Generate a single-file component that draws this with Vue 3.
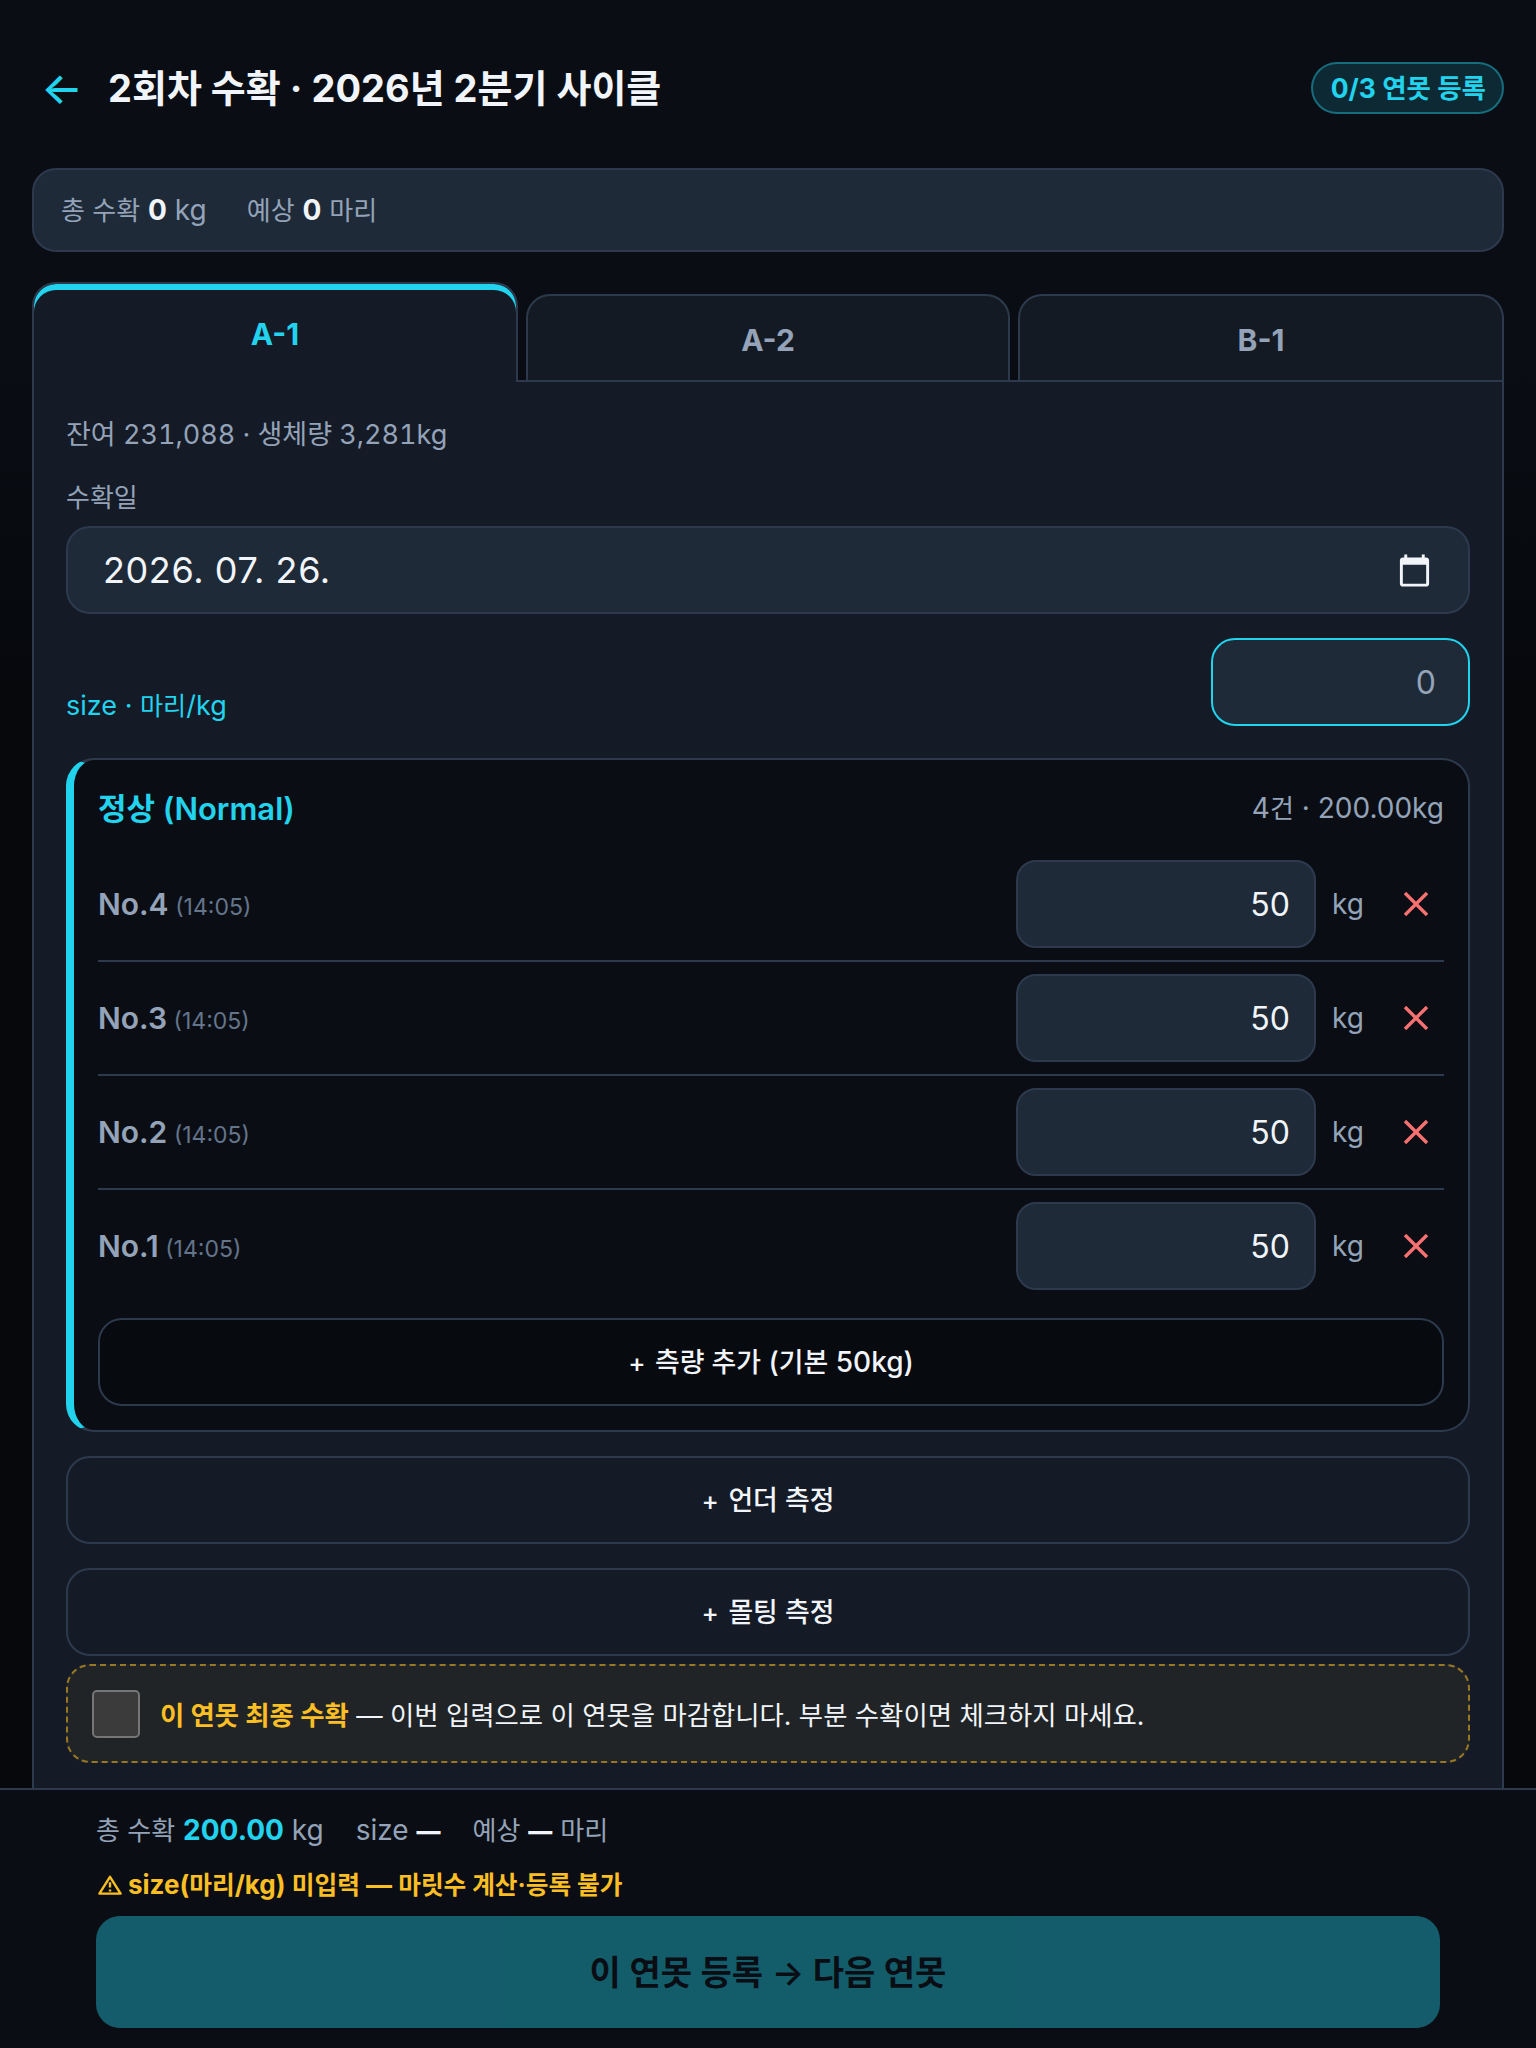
<script setup>
const rows = [
  { no: 'No.4', time: '(14:05)', kg: 50 },
  { no: 'No.3', time: '(14:05)', kg: 50 },
  { no: 'No.2', time: '(14:05)', kg: 50 },
  { no: 'No.1', time: '(14:05)', kg: 50 },
]
const tabs = [
  { name: 'A-1', active: true },
  { name: 'A-2', active: false },
  { name: 'B-1', active: false },
]
</script>

<template>
  <div class="page">
    <main class="main">
      <header class="head">
        <span class="back">←</span>
        <h1 class="title">2회차 수확 · 2026년 2분기 사이클</h1>
        <span class="badge">0/3 연못 등록</span>
      </header>

      <section class="summary">
        <span><i>총 수확</i> <b>0</b> kg</span>
        <span><i>예상</i> <b>0</b> <i>마리</i></span>
      </section>

      <nav class="tabs">
        <div v-for="t in tabs" :key="t.name" class="tab" :class="{ active: t.active }">{{ t.name }}</div>
      </nav>

      <section class="panel">
        <div class="info">잔여 231,088 · 생체량 3,281kg</div>
        <div class="label">수확일</div>
        <div class="field date">
          <span>2026. 07. 26.</span>
          <svg class="cal" viewBox="0 0 24 24" width="35" height="35">
            <path fill="#f1f5f9" d="M20 3h-1V1h-2v2H7V1H5v2H4c-1.1 0-2 .9-2 2v16c0 1.1.9 2 2 2h16c1.1 0 2-.9 2-2V5c0-1.1-.9-2-2-2zm0 18H4V8h16v13z" />
          </svg>
        </div>

        <div class="size-row">
          <span class="size-label">size · <i>마리</i>/kg</span>
          <div class="field size-input">0</div>
        </div>

        <div class="group">
          <div class="group-head">
            <span class="group-title">정상 (Normal)</span>
            <span class="group-meta">4<i>건</i> · 200.00kg</span>
          </div>
          <div v-for="r in rows" :key="r.no" class="row">
            <span class="row-name">{{ r.no }} <small>{{ r.time }}</small></span>
            <div class="field kg-input">{{ r.kg }}</div>
            <span class="unit">kg</span>
            <span class="del">
              <svg viewBox="0 0 24 24" width="24" height="24">
                <path d="M1 1 L23 23 M23 1 L1 23" stroke="#f87171" stroke-width="3.4" fill="none" />
              </svg>
            </span>
          </div>
          <div class="add add-inner"><span><span class="plus">+</span> <i>측량 추가</i> (<i>기본</i> 50kg)</span></div>
        </div>

        <div class="add"><span><span class="plus">+</span> <i>언더 측정</i></span></div>
        <div class="add"><span><span class="plus">+</span> <i>몰팅 측정</i></span></div>

        <div class="final">
          <span class="check"></span>
          <span class="final-text"><b>이 연못 최종 수확</b> — 이번 입력으로 이 연못을 마감합니다. 부분 수확이면 체크하지 마세요.</span>
        </div>
      </section>
    </main>

    <footer class="foot">
      <div class="foot-sum">
        <span><i>총 수확</i> <b class="hl">200.00</b> kg</span>
        <span>size <b class="dash">—</b></span>
        <span><i>예상</i> <b class="dash">—</b> <i>마리</i></span>
      </div>
      <div class="warn">
        <svg class="warn-icon" viewBox="0 0 24 20" width="24" height="20">
          <path d="M12 1.8 L22.6 18.6 H1.4 Z" fill="none" stroke="#fbbf24" stroke-width="2.4" stroke-linejoin="round" />
          <path d="M12 7.2 V12.6 M12 14.4 V16.4" fill="none" stroke="#fbbf24" stroke-width="2.4" />
        </svg>
        <span>size(<i>마리</i>/kg) <i>미입력</i> — <i>마릿수 계산·등록 불가</i></span>
      </div>
      <button class="submit" type="button">이 연못 등록 → 다음 연못</button>
    </footer>
  </div>
</template>

<style>
html, body { margin: 0; background: #0a0e14; }
</style>

<style scoped>
.page {
  height: 2048px;
  display: flex;
  flex-direction: column;
  background: #0a0e14;
  color: #f1f5f9;
  font-family: Inter, "Noto Sans CJK KR", sans-serif;
  overflow: hidden;
}
i {
  font-style: normal;
  font-size: 0.93em;
}
.main {
  flex: 1;
  min-height: 0;
  overflow: hidden;
  padding: 62px 32px 0;
  background: linear-gradient(180deg, #0a0e14 0, #0a0e14 280px, #06080c 700px, #06080c 100%);
}
.head {
  display: flex;
  align-items: center;
  height: 52px;
  margin-bottom: 54px;
}
.back {
  width: 76px;
  padding-left: 9px;
  box-sizing: border-box;
  font-size: 44px;
  font-weight: 500;
  line-height: 50px;
  color: #22d3ee;
}
.title {
  margin: 0;
  flex: 1;
  font-size: 38px;
  font-weight: 700;
  line-height: 52px;
}
.badge {
  box-sizing: border-box;
  height: 52px;
  padding: 0 16px 0 18px;
  border: 2px solid rgba(34, 211, 238, 0.4);
  border-radius: 26px;
  background: rgba(34, 211, 238, 0.15);
  color: #22d3ee;
  font-size: 26.5px;
  font-weight: 700;
  line-height: 48px;
}
.summary {
  box-sizing: border-box;
  height: 84px;
  display: flex;
  align-items: center;
  gap: 40px;
  padding: 0 27px 3px;
  margin-bottom: 30px;
  background: #1e2a38;
  border: 2px solid #2d3a4d;
  border-radius: 24px;
  color: #94a3b8;
  font-size: 28px;
}
.summary b { color: #f1f5f9; font-weight: 700; }
.tabs {
  box-sizing: border-box;
  display: flex;
  align-items: flex-end;
  gap: 8px;
  height: 100px;
  border-bottom: 2px solid #2d3a4d;
}
.tab {
  flex: 1 1 0;
  box-sizing: border-box;
  height: 86px;
  padding-top: 4px;
  display: flex;
  align-items: center;
  justify-content: center;
  background: #141a24;
  border: 2px solid #2d3a4d;
  border-bottom: 0;
  border-radius: 24px 24px 0 0;
  color: #94a3b8;
  font-size: 30px;
  font-weight: 700;
}
.tab:nth-child(2) { flex: 0 0 484px; }
.tab.active {
  height: 100px;
  margin-bottom: -2px;
  padding-top: 2px;
  position: relative;
  background: #141b27;
  box-shadow: inset 0 6px 0 #22d3ee;
  color: #22d3ee;
}
.panel {
  box-sizing: border-box;
  height: 1500px;
  padding: 33px 32px 0;
  background: #141b27;
  border: 2px solid #2d3a4d;
  border-top: 0;
}
.info {
  font-size: 27px;
  line-height: 40px;
  color: #94a3b8;
  font-variant-numeric: tabular-nums;
}
.label {
  margin-top: 23px;
  margin-bottom: 8px;
  font-size: 26px;
  line-height: 40px;
  color: #94a3b8;
}
.field {
  box-sizing: border-box;
  height: 88px;
  display: flex;
  align-items: center;
  background: #1e2a38;
  border: 2px solid #2d3a4d;
  border-radius: 24px;
}
.date {
  justify-content: space-between;
  padding: 0 36px 0 35px;
  font-size: 36px;
  letter-spacing: 0.6px;
}
.cal { flex: none; }
.size-row {
  display: flex;
  justify-content: space-between;
  align-items: flex-end;
  margin-top: 24px;
}
.size-label {
  font-size: 27px;
  line-height: 40px;
  color: #22d3ee;
}
.size-input {
  width: 259px;
  justify-content: flex-end;
  padding-right: 32px;
  border-color: #22d3ee;
  font-size: 32px;
  color: #94a3b8;
}
.group {
  box-sizing: border-box;
  margin-top: 32px;
  padding: 24px 24px 24px;
  background: #0a0e14;
  border: 2px solid #2d3a4d;
  border-left: 8px solid #22d3ee;
  border-radius: 28px;
}
.group-head {
  display: flex;
  justify-content: space-between;
  align-items: center;
  height: 44px;
  margin-bottom: 32px;
}
.group-title {
  font-size: 31px;
  font-weight: 600;
  color: #22d3ee;
}
.group-meta {
  font-size: 28px;
  color: #94a3b8;
}
.row {
  display: flex;
  align-items: center;
  padding-bottom: 12px;
  margin-bottom: 12px;
  border-bottom: 2px solid #2d3a4d;
}
.row:nth-last-child(2) {
  border-bottom: 0;
  padding-bottom: 0;
  margin-bottom: 28px;
}
.row-name {
  flex: 1;
  font-size: 30px;
  font-weight: 600;
  color: #94a3b8;
}
.row-name small {
  margin-left: -1px;
  font-size: 23px;
  font-weight: 400;
  color: #64748b;
}
.kg-input {
  width: 300px;
  justify-content: flex-end;
  padding-right: 24px;
  border-radius: 20px;
  font-size: 32px;
}
.unit {
  width: 72px;
  padding-left: 16px;
  box-sizing: border-box;
  font-size: 28px;
  color: #94a3b8;
}
.del {
  width: 56px;
  display: flex;
  justify-content: center;
}
.add {
  box-sizing: border-box;
  height: 88px;
  display: flex;
  align-items: center;
  justify-content: center;
  margin-top: 24px;
  padding-bottom: 3px;
  border: 2px solid #2d3a4d;
  border-radius: 24px;
  font-size: 28px;
  font-weight: 500;
}
.add i { font-size: 0.96em; }
.plus {
  font-size: 26px;
  margin-right: 2px;
}
.add-inner {
  margin-top: 0;
  background: #070a0f;
}
.final {
  box-sizing: border-box;
  height: 99px;
  display: flex;
  align-items: center;
  gap: 20px;
  margin-top: 8px;
  padding: 0 24px;
  background: rgba(251, 191, 36, 0.06);
  border: 2px dashed rgba(251, 191, 36, 0.55);
  border-radius: 24px;
}
.check {
  box-sizing: border-box;
  flex: none;
  width: 48px;
  height: 48px;
  background: #3b3b3b;
  border: 2px solid #767676;
  border-radius: 5px;
}
.final-text {
  font-size: 26.4px;
}
.final-text b { color: #fbbf24; font-weight: 700; }
.foot {
  box-sizing: border-box;
  height: 260px;
  flex: none;
  padding: 0 96px 20px;
  display: flex;
  flex-direction: column;
  background: #0a0e14;
  border-top: 2px solid #2d3a4d;
}
.foot-sum {
  display: flex;
  gap: 32px;
  align-items: baseline;
  margin-top: 18px;
  line-height: 44px;
  font-size: 28px;
  color: #94a3b8;
}
.foot-sum b { color: #f1f5f9; font-weight: 700; }
.foot-sum b.hl { color: #22d3ee; }
.foot-sum b.dash { font-size: 24px; font-weight: 800; }
.warn {
  display: flex;
  align-items: center;
  gap: 6px;
  margin-top: 11px;
  font-size: 26px;
  font-weight: 700;
  line-height: 40px;
  color: #fbbf24;
}
.warn i { font-size: 0.95em; }
.warn-icon { flex: none; margin-left: 2px; }
.submit {
  margin-top: auto;
  height: 112px;
  padding-bottom: 4px;
  border: 0;
  border-radius: 24px;
  background: #22d3ee;
  opacity: 0.4;
  color: #0a0e14;
  font-family: inherit;
  font-size: 34px;
  font-weight: 600;
}
</style>
